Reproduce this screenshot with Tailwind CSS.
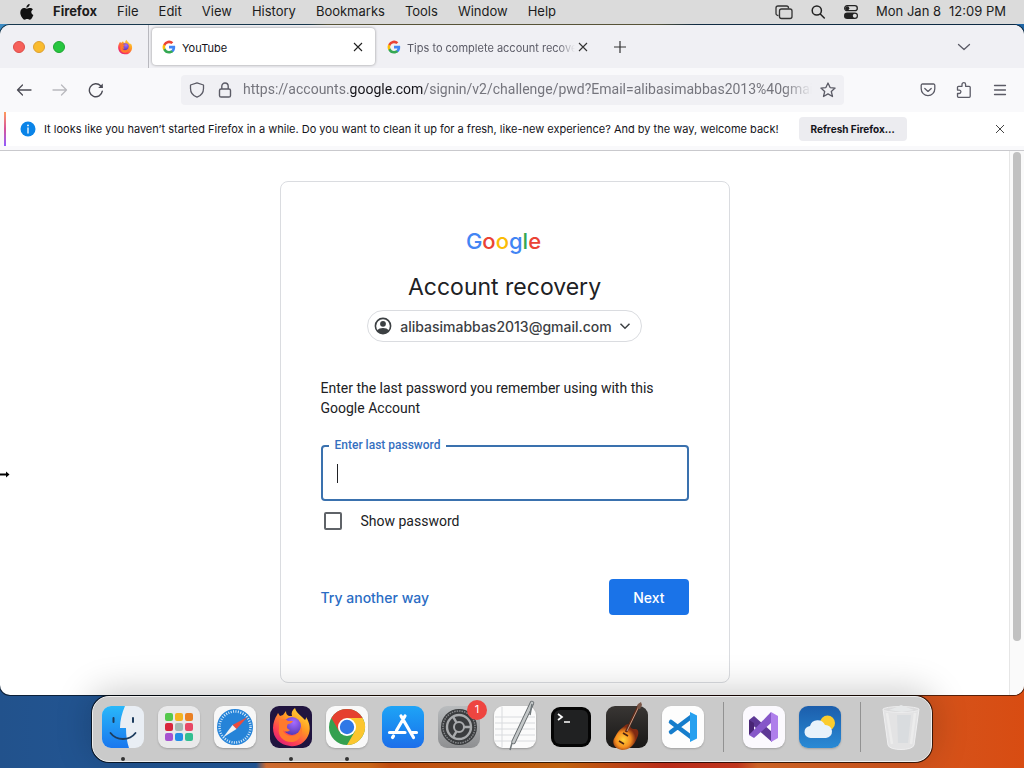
<!DOCTYPE html>
<html lang="en">
<head>
<meta charset="utf-8">
<meta name="viewport" content="width=device-width, initial-scale=1">
<title>Account recovery</title>
<script src="https://cdn.jsdelivr.net/npm/@tailwindcss/browser@4"></script>
</head>
<body class="relative isolate flex h-screen flex-col overflow-hidden font-['Inter','Liberation_Sans',sans-serif] text-[#15141a]">

<!-- Wallpaper -->
<div class="absolute inset-x-0 top-0 -z-10 h-1/2 bg-[linear-gradient(90deg,#3d8cc4_0%,#3d8cc4_30%,#d9d08a_32%,#d9d08a_64%,#2a6ea8_68%,#1f66a6_100%)]"></div>
<div class="absolute inset-x-0 bottom-0 -z-10 h-1/2 bg-[linear-gradient(90deg,#22528c_0%,#22599c_25%,#de7436_26%,#d96f1a_36%,#cf5312_38%,#d06a10_55%,#c8301c_65%,#cf3a20_72%,#db6a28_74%,#d5541c_90%,#d84c12_100%)]"></div>

<!-- Menu bar -->
<header class="flex h-6 shrink-0 items-center bg-[#dbdbdb] pr-[18px] pl-5 text-[13px] text-[#1c1c1c]">
  <svg class="h-4 w-[14px]" viewBox="0 0 14 16" fill="#111" aria-hidden="true"><path d="M9.6 0c.1 1-.3 1.900-.9 2.600-.6.7-1.500 1.200-2.300 1.100-.1-.9.300-1.900.9-2.500C7.900.5 8.900 0 9.600 0zM12.900 5.400c-1 .6-1.600 1.500-1.600 2.700 0 1.400.8 2.500 2.100 3-.3.900-.8 1.800-1.300 2.600-.7 1.100-1.400 2-2.400 2-.9 0-1.300-.6-2.500-.6s-1.600.6-2.500.6c-1 0-1.700-.9-2.500-2C.9 12.200.2 10.200.3 8.300c.1-2.600 1.800-4.200 3.700-4.200 1.100 0 2.100.7 2.900.7.700 0 1.900-.8 3.300-.7 1 0 2 .4 2.700 1.300z"/></svg>
  <nav class="flex flex-1 gap-5 pl-[19px]" aria-label="Menu bar">
    <button class="font-bold">Firefox</button><button>File</button><button>Edit</button><button>View</button><button>History</button><button>Bookmarks</button><button>Tools</button><button>Window</button><button>Help</button>
  </nav>
  <div class="flex items-center gap-[17px]">
    <svg class="size-[18px]" viewBox="0 0 18 18" fill="none" stroke="#333" stroke-width="1.300" aria-hidden="true"><path d="M3.500 12.500H3a2 2 0 0 1-2-2V5a2 2 0 0 1 2-2h8.500a2 2 0 0 1 2 2v.5"/><rect x="4.500" y="6" width="12.500" height="9.500" rx="2"/></svg>
    <svg class="size-4" viewBox="0 0 16 16" fill="none" stroke="#222" stroke-width="1.500" stroke-linecap="round" aria-hidden="true"><circle cx="6.800" cy="6.500" r="4.600"/><path d="m10.300 10 4 4"/></svg>
    <svg class="size-4" viewBox="0 0 16 16" aria-hidden="true"><rect x="1.700" y="1.700" width="12.600" height="5" rx="2.500" fill="none" stroke="#222" stroke-width="1.300"/><circle cx="4.300" cy="4.200" r="2" fill="#222"/><rect x="1" y="8.500" width="14" height="6.500" rx="3.200" fill="#222"/><circle cx="11.800" cy="11.700" r="2" fill="#ddd"/></svg>
    <time class="flex gap-2 whitespace-nowrap"><span>Mon Jan 8</span><span>12:09 PM</span></time>
  </div>
</header>

<!-- Browser window -->
<main class="mt-px flex min-h-0 flex-1 flex-col overflow-hidden rounded-[10px] bg-white ring-1 ring-black/60">
  <div class="flex h-[43px] shrink-0 items-center bg-[#f0f0f4] pl-[13px]">
    <div class="flex gap-2">
      <button aria-label="Close window" class="size-3 rounded-full border border-[#dd4b48] bg-[#f6605a]"></button>
      <button aria-label="Minimize window" class="size-3 rounded-full border border-[#dda032] bg-[#f9bb2e]"></button>
      <button aria-label="Zoom window" class="size-3 rounded-full border border-[#1da631] bg-[#27c63f]"></button>
    </div>
    <button aria-label="Firefox View" class="ml-[52px]"><svg class="size-4" viewBox="0 0 42 42"><use href="#fox"/></svg></button>
    <div class="ml-[15px] h-full w-px bg-[#b8b8be]"></div>
    <div role="tablist" class="flex items-center">
      <div class="ml-[3px] flex h-[37px] w-[223px] items-center rounded bg-white pr-3 pl-[10px] text-[11px] shadow-[0_0_3px_rgba(0,0,0,0.4)]">
        <svg class="size-[14px] shrink-0" viewBox="0 0 24 24"><use href="#g"/></svg>
        <button role="tab" aria-selected="true" class="flex-1 pt-[3px] pl-[6px] text-left">YouTube</button>
        <button aria-label="Close tab"><svg class="size-[10px]" viewBox="0 0 10 10" stroke="#222" stroke-width="1.100"><path d="m1 1 8 8M9 1 1 9"/></svg></button>
      </div>
      <div class="flex h-[37px] w-[219px] items-center pr-[6px] pl-3 text-[11px] text-[#5b5b66]">
        <svg class="size-[14px] shrink-0" viewBox="0 0 24 24"><use href="#g"/></svg>
        <button role="tab" aria-selected="false" class="mr-[3px] ml-[6px] min-w-0 flex-1 overflow-hidden mask-r-from-90% pt-[3px] text-left whitespace-nowrap">Tips to complete account recovery</button>
        <button aria-label="Close tab"><svg class="size-[10px]" viewBox="0 0 10 10" stroke="#333" stroke-width="1.100"><path d="m1 1 8 8M9 1 1 9"/></svg></button>
      </div>
    </div>
    <button aria-label="New tab" class="ml-5 pt-px"><svg class="size-3" viewBox="0 0 12 12" stroke="#333" stroke-width="1.200"><path d="M6 0v12M0 6h12"/></svg></button>
    <button aria-label="List all tabs" class="mr-[53px] ml-auto"><svg class="size-[14px]" viewBox="0 0 14 14" fill="none" stroke="#5b5b66" stroke-width="1.300" stroke-linecap="round" stroke-linejoin="round"><path d="m1.500 4.500 5.500 5 5.500-5"/></svg></button>
  </div>

  <div class="flex h-[43px] shrink-0 items-center gap-1 bg-[#f9f9fb] px-2 text-[#5b5b66]">
    <button aria-label="Back" class="grid size-8 shrink-0 place-items-center text-[#4c4c55]"><svg class="size-4" viewBox="0 0 16 16" fill="none" stroke="currentColor" stroke-width="1.300" stroke-linecap="round" stroke-linejoin="round"><path d="M15 8H1.500M6.500 3l-5 5 5 5"/></svg></button>
    <button aria-label="Forward" class="grid size-8 shrink-0 place-items-center text-[#b9b9be]"><svg class="size-4" viewBox="0 0 16 16" fill="none" stroke="currentColor" stroke-width="1.300" stroke-linecap="round" stroke-linejoin="round"><path d="M1 8h13.500M9.500 3l5 5-5 5"/></svg></button>
    <button aria-label="Reload" class="grid size-8 shrink-0 place-items-center text-[#4c4c55]"><svg class="size-4" viewBox="0 0 16 16" fill="none" stroke="currentColor" stroke-width="1.400" stroke-linecap="round"><path d="M14.300 9.200A6.500 6.500 0 1 1 12.600 3.800L14 5.200"/><path d="M14.800 1.500v4.600h-4.600z" fill="currentColor" stroke="none"/></svg></button>
    <div class="mr-16 ml-[65px] flex h-[30px] min-w-0 flex-1 items-center rounded bg-[#f0f0f4] px-2">
      <svg class="size-4 shrink-0" viewBox="0 0 16 16" fill="none" stroke="currentColor" stroke-width="1.300" stroke-linejoin="round" aria-hidden="true"><path d="M8 .8 14.500 3v3.500c0 3.800-2.500 7.200-6.500 8.700-4-1.500-6.500-4.900-6.500-8.700V3z"/></svg>
      <svg class="ml-3 size-4 shrink-0" viewBox="0 0 16 16" fill="none" stroke="currentColor" stroke-width="1.400" aria-hidden="true"><rect x="2.500" y="7" width="11" height="8" rx="1.600"/><path d="M4.800 7V4.200a3.200 3.200 0 0 1 6.400 0V7"/></svg>
      <div role="textbox" aria-label="Address" class="ml-[10px] min-w-0 flex-1 overflow-hidden mask-r-from-95% font-[Roboto,'Liberation_Sans',sans-serif] text-[14px] whitespace-nowrap text-[#75757d]">https://accounts.<span class="text-[#15141a]">google.com</span>/signin/v2/challenge/pwd?Email=alibasimabbas2013%40gmail.com</div>
      <button aria-label="Bookmark this page" class="ml-2"><svg class="size-4" viewBox="0 0 16 16" fill="none" stroke="currentColor" stroke-width="1.300" stroke-linejoin="round"><path d="m8 1 2.100 4.600 5 .5-3.800 3.400 1.200 5L8 11.900l-4.500 2.600 1.200-5L.9 6.100l5-.5z"/></svg></button>
    </div>
    <button aria-label="Save to Pocket" class="grid size-8 shrink-0 place-items-center"><svg class="size-4" viewBox="0 0 16 16" fill="none" stroke="currentColor" stroke-width="1.300" stroke-linecap="round" stroke-linejoin="round"><path d="M2.500 2h11a1.300 1.300 0 0 1 1.300 1.300v3.500a6.800 6.800 0 0 1-13.600 0V3.300A1.300 1.300 0 0 1 2.500 2z"/><path d="M4.800 6.500 8 9.400l3.200-2.900"/></svg></button>
    <button aria-label="Extensions" class="grid size-8 shrink-0 place-items-center"><svg class="size-4" viewBox="0 0 16 16" fill="none" stroke="currentColor" stroke-width="1.300" stroke-linejoin="round"><path d="M1.500 5.300A1 1 0 0 1 2.500 4.300H6V2.500a1.800 1.800 0 0 1 3.600 0v1.800h3.600a1 1 0 0 1 1 1v9a1 1 0 0 1-1 1H2.500a1 1 0 0 1-1-1v-2.800h1.700a1.700 1.700 0 0 0 0-3.400H1.500z"/></svg></button>
    <button aria-label="Application menu" class="grid size-8 shrink-0 place-items-center"><svg class="size-4" viewBox="0 0 16 16" stroke="currentColor" stroke-width="1.300" stroke-linecap="round"><path d="M2.500 3.500h11M2.500 8h11M2.500 12.500h11"/></svg></button>
  </div>

  <div class="h-10 shrink-0 border-b border-[#c9c9cd] bg-[#f9f9fb] pt-px pb-1 pl-1">
    <div class="flex h-[34px] items-center bg-white text-[11px] whitespace-nowrap">
      <div class="h-full w-[2px] bg-linear-to-b from-[#ff9a56] via-[#d6509a] to-[#9059ff]"></div>
      <svg class="ml-[14px] size-4" viewBox="0 0 16 16" aria-hidden="true"><circle cx="8" cy="8" r="7.500" fill="#0a84e8"/><path d="M8 7v5" stroke="#fff" stroke-width="1.300" stroke-linecap="round"/><circle cx="8" cy="4.400" r=".9" fill="#fff"/></svg>
      <p class="ml-2">It looks like you haven’t started Firefox in a while. Do you want to clean it up for a fresh, like-new experience? And by the way, welcome back!</p>
      <button class="ml-5 h-6 w-[108px] rounded bg-[#ececf0] text-[10px] font-bold">Refresh Firefox…</button>
      <button aria-label="Close notification" class="mr-[19px] ml-auto"><svg class="size-[10px]" viewBox="0 0 10 10" stroke="#444" stroke-width="1"><path d="m1 1 8 8M9 1 1 9"/></svg></button>
    </div>
  </div>

  <div class="flex min-h-0 flex-1">
    <section class="flex min-w-0 flex-1 justify-center overflow-hidden pt-[30px]">
      <form class="flex h-[502px] w-[450px] shrink-0 flex-col rounded-lg border border-[#dadce0] px-10 pt-[43px] text-[14px] text-[#202124]" onsubmit="return false">
        <div class="pr-[2px] text-center text-[22px] leading-8 font-medium" aria-label="Google"><span class="text-[#4285f4]">G</span><span class="text-[#ea4335]">o</span><span class="text-[#fbbc05]">o</span><span class="text-[#4285f4]">g</span><span class="text-[#34a853]">l</span><span class="text-[#ea4335]">e</span></div>
        <h1 class="mt-[14px] text-center text-[23px] leading-8">Account recovery</h1>
        <button type="button" class="mt-[7px] flex h-8 items-center gap-[7px] self-center rounded-full border border-[#dadce0] pr-[10px] pl-[5px] font-medium text-[#3c4043]">
          <svg class="size-5" viewBox="0 0 20 20" aria-hidden="true"><circle cx="10" cy="10" r="7.600" fill="none" stroke="#3c4043" stroke-width="1.600"/><circle cx="10" cy="7.800" r="2.900" fill="#3c4043"/><path d="M4 14.400c1.300-1.700 3.600-2.500 6-2.500s4.700.8 6 2.500c-1.400 2-3.600 3.200-6 3.200s-4.600-1.200-6-3.200z" fill="#3c4043"/></svg>
          <span>alibasimabbas2013@gmail.com</span>
          <svg class="size-3" viewBox="0 0 12 12" fill="none" stroke="#3c4043" stroke-width="1.500" aria-hidden="true"><path d="m1.500 3.800 4.500 4.500 4.500-4.500"/></svg>
        </button>
        <p class="mt-9 font-[Roboto,'Liberation_Sans',sans-serif] leading-5">Enter the last password you remember using with this Google Account</p>
        <div class="relative mt-[27px]">
          <input id="pw" type="password" class="block h-14 w-full rounded border-2 border-[#3a71ae] px-[14px] text-[16px] outline-none">
          <label for="pw" class="absolute -top-2 left-2 bg-white px-[6px] font-[Roboto,'Liberation_Sans',sans-serif] text-[12px] leading-4 font-medium text-[#3570c0]">Enter last password</label>
          <span class="absolute top-[19px] left-4 h-[19px] w-px bg-[#202124]" aria-hidden="true"></span>
        </div>
        <label class="mt-[11px] ml-[3px] flex items-center gap-[19px] font-[Roboto,'Liberation_Sans',sans-serif] leading-[18px]"><input type="checkbox" class="size-[18px] appearance-none rounded-[2px] border-2 border-[#5f6368]">Show password</label>
        <div class="mt-[49px] flex items-center justify-between font-medium">
          <a href="#" class="text-[#2a6cc4]">Try another way</a>
          <button class="h-9 rounded bg-[#1a73e8] px-6 text-white">Next</button>
        </div>
      </form>
    </section>
    <div class="w-[15px] shrink-0 border-l border-[#e6e6e6] bg-[#fafafa] pt-px pl-[3px]">
      <div class="h-[90%] w-2 rounded-full bg-[#c1c1c1]"></div>
    </div>
  </div>
</main>

<!-- Resize cursor on the window's left edge -->
<svg class="absolute top-[469px] left-0 h-[11px] w-[11px]" viewBox="0 0 11 11" aria-hidden="true"><path d="M0 5.500h7M6 2.500 9.500 5.500 6 8.500z" stroke="#fff" stroke-width="3"/><path d="M0 5.500h7" stroke="#000" stroke-width="2"/><path d="M6 2.500 9.500 5.500 6 8.500z"/></svg>

<!-- Dock -->
<footer class="relative z-10 flex h-[73px] shrink-0 justify-center pt-px pb-[6px]">
  <div class="flex items-center gap-[14px] rounded-[17px] border border-[#eee] bg-[#cacaca] px-[9px] pb-[5px] shadow-[0_0_0_1px_rgba(0,0,0,0.7),0_-4px_36px_rgba(0,0,0,0.22)]">
    <button aria-label="Finder" class="relative size-[42px]">
      <svg viewBox="0 0 42 42"><defs><linearGradient id="fb" x1="0" y1="0" x2="0" y2="1"><stop stop-color="#29b8fa"/><stop offset="1" stop-color="#1a77ee"/></linearGradient><clipPath id="tile"><rect width="42" height="42" rx="9"/></clipPath></defs><g clip-path="url(#tile)"><path fill="#e9eef4" d="M0 0h42v42H0z"/><path d="M0 0h23c-3 7-5 14-5 22h6c0 8 1 14 3 20H0z" fill="url(#fb)"/></g><path d="M11.500 12v4M31 12v4" stroke="#1d3c5e" stroke-width="2" stroke-linecap="round"/><path d="M8.500 27c6 8 19 8 25 0" fill="none" stroke="#1d3c5e" stroke-width="1.800" stroke-linecap="round"/></svg>
      <span class="absolute -bottom-[13px] left-[19px] size-1 rounded-full bg-[#333]"></span>
    </button>
    <button aria-label="Launchpad" class="size-[42px] rounded-[9px] bg-[#e9e9ea] shadow-[0_1px_2px_rgba(0,0,0,0.2)]">
      <svg viewBox="0 0 42 42"><rect x="7" y="7" width="8" height="8" rx="2" fill="#55c84c"/><rect x="17" y="7" width="8" height="8" rx="2" fill="#f3b321"/><rect x="27" y="7" width="8" height="8" rx="2" fill="#ea8023"/><rect x="7" y="17" width="8" height="8" rx="2" fill="#d8263b"/><rect x="17" y="17" width="8" height="8" rx="2" fill="#a6b8b2"/><rect x="27" y="17" width="8" height="8" rx="2" fill="#e84866"/><rect x="7" y="27" width="8" height="8" rx="2" fill="#a653d0"/><rect x="17" y="27" width="8" height="8" rx="2" fill="#238fe6"/><rect x="27" y="27" width="8" height="8" rx="2" fill="#32bf91"/></svg>
    </button>
    <button aria-label="Safari" class="size-[42px] rounded-[9px] bg-[#f7f7f7] shadow-[0_1px_2px_rgba(0,0,0,0.25)]">
      <svg viewBox="0 0 42 42"><circle cx="21" cy="21" r="18" fill="#2583d8"/><circle cx="21" cy="21" r="15.500" fill="none" stroke="#d9ecfb" stroke-width="2.500" stroke-dasharray="1 1.435"/><path d="m33.500 11-11 12-4-4z" fill="#ed4b3c"/><path d="m9 31.500 9.500-12.500 4 4z" fill="#f2f2f2"/></svg>
    </button>
    <button aria-label="Firefox" class="relative size-[42px] rounded-[9px] bg-[#20143f]">
      <svg viewBox="0 0 42 42"><use href="#fox"/></svg>
      <span class="absolute -bottom-[13px] left-[19px] size-1 rounded-full bg-[#333]"></span>
    </button>
    <button aria-label="Chrome" class="relative size-[42px] rounded-[9px] bg-[#f9f9f9] shadow-[0_1px_2px_rgba(0,0,0,0.2)]">
      <svg viewBox="0 0 42 42"><circle cx="21" cy="21" r="18" fill="#34a04f"/><path d="M21 12h15.600A18 18 0 0 1 21 39l7.800-13.500z" fill="#fcc62e"/><path d="M5.400 12a18 18 0 0 1 31.200 0H21l-7.800 13.500z" fill="#e5402f"/><circle cx="21" cy="21" r="9" fill="#fff"/><circle cx="21" cy="21" r="7.200" fill="#2f78e6"/></svg>
      <span class="absolute -bottom-[13px] left-[19px] size-1 rounded-full bg-[#333]"></span>
    </button>
    <button aria-label="App Store" class="size-[42px] rounded-[9px] bg-linear-to-b from-[#1fa4f6] to-[#1d6eea]">
      <svg viewBox="0 0 42 42" fill="none" stroke="#fff" stroke-width="3.200" stroke-linecap="round"><path d="M23 10 14.500 24.500M11.500 30l-1 1.500M19 10l12.500 21.500M7.500 26.500H23M30 26.500h4.500"/></svg>
    </button>
    <button aria-label="System Settings" class="relative size-[42px] rounded-[9px] bg-linear-to-b from-[#b9bcbe] to-[#8e8f91]">
      <svg viewBox="0 0 42 42" fill="none"><circle cx="21" cy="21" r="18" fill="#3a3c3e"/><circle cx="21" cy="21" r="16" stroke="#85878a" stroke-width="1.500" stroke-dasharray="1.500 1"/><circle cx="21" cy="21" r="12" stroke="#a9abad" stroke-width="2.400"/><circle cx="21" cy="21" r="5" stroke="#a9abad" stroke-width="2"/><path d="M26 21h7M18.500 16.700 15 10.600M18.500 25.300 15 31.400" stroke="#a9abad" stroke-width="2.400"/></svg>
      <span class="absolute -top-[6px] -right-[7px] grid size-5 place-items-center rounded-full bg-[#ee4540] text-[11px] text-white">1</span>
    </button>
    <button aria-label="TextEdit" class="size-[42px] rounded-[9px] bg-[#fbfbfb] shadow-[0_1px_2px_rgba(0,0,0,0.25)]">
      <svg class="overflow-visible" viewBox="0 0 42 42" fill="none"><path d="M1 11h40M1 17h40M1 23h40M1 29h40M1 35h40M8 1v40" stroke="#d9dbde"/><path d="M38-3 19.500 36" stroke="#666b6e" stroke-width="4.500" stroke-linecap="round"/><path d="M38-3 19.500 36" stroke="#c4c8c9" stroke-width="2.800" stroke-linecap="round"/><path d="m38-2-2 11M18 37l-2 7" stroke="#70777a" stroke-width="1.500"/></svg>
    </button>
    <button aria-label="Terminal" class="size-[42px]">
      <svg viewBox="0 0 42 42" fill="none"><rect x="1" y="1" width="40" height="40" rx="9" fill="#050505"/><rect x="4" y="4" width="34" height="34" rx="6" fill="#202122"/><path d="m8 8 4 3-4 3M14 16h6" stroke="#fff" stroke-width="1.700"/></svg>
    </button>
    <button aria-label="GarageBand" class="size-[42px] rounded-[9px] bg-linear-to-b from-[#393634] to-[#191817]">
      <svg class="overflow-visible" viewBox="0 0 42 42"><defs><radialGradient id="gt" cx=".4" cy=".6"><stop stop-color="#ffd43b"/><stop offset=".6" stop-color="#f58d1f"/><stop offset="1" stop-color="#812a12"/></radialGradient></defs><path d="M16 22c2-1 3-4 7-4l2 4c1 1 3 1 5 1 3 1 3 5 1 9-3 8-8 12-15 12-8-1-11-8-7-13 2-4 4-7 7-9z" fill="url(#gt)"/><path d="m33-1-13 27" stroke="#5b2918" stroke-width="2.600"/><path d="m34-2-13 27" stroke="#c29a86" stroke-width="1"/><path d="m32-2 3-2 1 3-2 4-3-1z" fill="#7a5748"/><path d="m17 27 5 3M13 35l5 3" stroke="#4b2211" stroke-width="1.600"/></svg>
    </button>
    <button aria-label="Visual Studio Code" class="size-[42px] rounded-[9px] bg-[#fdfdfd] shadow-[0_1px_2px_rgba(0,0,0,0.2)]">
      <svg viewBox="0 0 42 42" fill="none"><path d="m9 16 20 15M9 26 29 11" stroke="#167dcc" stroke-width="4.500" stroke-linecap="round"/><path d="m28 6 7 3.500v23L28 36z" fill="#27a0ef"/></svg>
    </button>
    <div class="mx-[5px] h-[50px] w-px bg-[#929292]"></div>
    <button aria-label="Visual Studio" class="size-[42px] rounded-[9px] bg-[#fbf9fe] shadow-[0_1px_2px_rgba(0,0,0,0.2)]">
      <svg viewBox="0 0 42 42"><path d="m6 14 5-4 18 16v10L6 16z" fill="#5d3895"/><path d="m6 14 5 3v9l-5 3z" fill="#492575"/><path d="M6 29 28 6v11L11 32z" fill="#8657c9"/><path d="m28 6 7 4v22l-7 4z" fill="#af7feb"/></svg>
    </button>
    <button aria-label="Weather" class="size-[42px] rounded-[9px] bg-linear-to-b from-[#1c5eac] to-[#2a8ad5] shadow-[0_1px_2px_rgba(0,0,0,0.2)]">
      <svg viewBox="0 0 42 42"><circle cx="28.500" cy="17" r="7.500" fill="#fbcc2e"/><path d="M12 32a6 6 0 0 1-1-12 8 8 0 0 1 15-1 6.500 6.500 0 0 1 1 13z" fill="#e8f2fb"/></svg>
    </button>
    <div class="mx-[5px] h-[50px] w-px bg-[#929292]"></div>
    <button aria-label="Trash" class="size-[42px]">
      <svg class="overflow-visible" viewBox="0 0 42 42"><path d="M3 3h36l-5 36c-1 6-25 6-26 0z" fill="#e3e3e4" stroke="#efeff0"/><path d="M17 9h14l-3 28H18z" fill="#d9dcdf"/><path d="m7 7 5 31M35 7l-4 31" stroke="#ececec" stroke-width="2.500"/><ellipse cx="21" cy="3.500" rx="18" ry="3" fill="#dadadb" stroke="#ededee"/><path d="m9 4 8-3 4-2 5 2 8 3-12 2z" fill="#e6e8e9"/></svg>
    </button>
  </div>
</footer>

<!-- Shared symbols -->
<svg class="absolute size-0" viewBox="0 0 42 42" aria-hidden="true"><defs>
<linearGradient id="fx" x1=".9" y1="0" x2=".2" y2="1"><stop stop-color="#ffe53e"/><stop offset=".4" stop-color="#ff9a22"/><stop offset=".75" stop-color="#ff4053"/><stop offset="1" stop-color="#d91b7b"/></linearGradient>
<radialGradient id="fp" cx=".6" cy=".3" r=".8"><stop stop-color="#a66cff"/><stop offset="1" stop-color="#4b31ad"/></radialGradient>
<g id="fox"><path d="M25 2c1 4 4 6 7 9l3 3c1-1 1-2 1-3 4 6 5 13 2 19-4 8-11 11-18 10C10 39 3 32 3 22c0-5 2-10 4-13l1-2 2 3 3-1 3-4c0 3 1 4 3 5h3c-1-3 0-6 3-8z" fill="url(#fx)"/><circle cx="22" cy="20" r="9" fill="url(#fp)"/><path d="M9 14c4-2 7-1 9 1h5c-1 2-3 3-5 3-2 3-1 5 2 6-2 2-5 2-7 0 1 4 5 6 10 6 5-1 8-5 8-10 3 7-1 15-8 16-9 1-16-6-14-14z" fill="#ff7a2d"/></g>
<g id="g"><path d="M22.600 12.300c0-.8-.1-1.600-.2-2.300H12v4.500h5.900a5 5 0 0 1-2.200 3.300v2.800h3.600c2.100-2 3.300-4.800 3.300-8.300z" fill="#4285f4"/><path d="M12 23c3 0 5.500-1 7.300-2.600l-3.600-2.800c-1 .7-2.200 1.100-3.700 1.100-2.900 0-5.300-1.900-6.200-4.500H2.200V17A11 11 0 0 0 12 23z" fill="#34a853"/><path d="M5.800 14.100a6.600 6.600 0 0 1 0-4.200V7.100H2.200a11 11 0 0 0 0 9.900z" fill="#fbbc05"/><path d="M12 5.400c1.600 0 3.100.6 4.200 1.600l3.200-3.100A11 11 0 0 0 2.200 7.100l3.600 2.800C6.700 7.300 9.100 5.400 12 5.400z" fill="#ea4335"/></g>
</defs></svg>
</body>
</html>
